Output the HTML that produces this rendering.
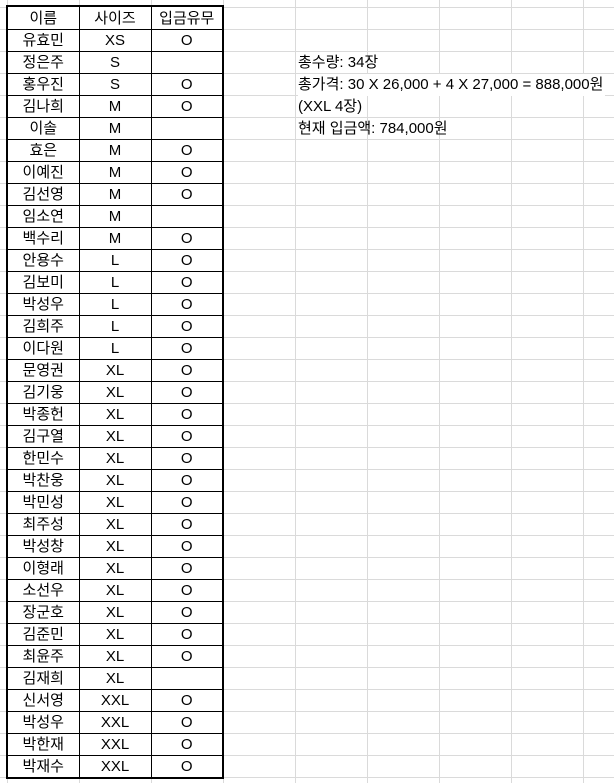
<!DOCTYPE html>
<html><head><meta charset="utf-8"><style>
html,body{margin:0;padding:0}
body{width:614px;height:783px;position:relative;overflow:hidden;background:#fff;
background-image:linear-gradient(to bottom,#dadada 1px,transparent 1px),linear-gradient(to right,#dadada 1px,transparent 1px);
background-size:100% 22px,72px 100%;background-position:0 7px,7px 0;
font-family:"Liberation Sans","Noto Sans CJK KR",sans-serif;font-size:15px;color:#000}
table{position:absolute;left:6px;top:5px;border-collapse:collapse;table-layout:fixed;width:213px;background:#fff;border:2px solid #000}
td{border:1px solid #000;height:21px;padding:0;text-align:center;line-height:21px;overflow:hidden;white-space:nowrap}
td span{position:relative;top:1px}
tr.h td{height:22px}
.t{position:absolute;left:298px;line-height:22px;white-space:nowrap;background:#fff;padding-right:2px}
</style></head><body>
<table>
<col style="width:72px"><col style="width:72px"><col style="width:72px">
<tr class="h"><td>이름</td><td>사이즈</td><td>입금유무</td></tr>
<tr><td>유효민</td><td>XS</td><td>O</td></tr>
<tr><td>정은주</td><td>S</td><td></td></tr>
<tr><td>홍우진</td><td>S</td><td>O</td></tr>
<tr><td>김나희</td><td>M</td><td>O</td></tr>
<tr><td>이솔</td><td>M</td><td></td></tr>
<tr><td>효은</td><td>M</td><td>O</td></tr>
<tr><td>이예진</td><td>M</td><td>O</td></tr>
<tr><td>김선영</td><td>M</td><td>O</td></tr>
<tr><td>임소연</td><td>M</td><td></td></tr>
<tr><td>백수리</td><td>M</td><td>O</td></tr>
<tr><td>안용수</td><td>L</td><td>O</td></tr>
<tr><td>김보미</td><td>L</td><td>O</td></tr>
<tr><td>박성우</td><td>L</td><td>O</td></tr>
<tr><td>김희주</td><td>L</td><td>O</td></tr>
<tr><td>이다원</td><td>L</td><td>O</td></tr>
<tr><td>문영권</td><td>XL</td><td>O</td></tr>
<tr><td>김기웅</td><td>XL</td><td>O</td></tr>
<tr><td>박종헌</td><td>XL</td><td>O</td></tr>
<tr><td>김구열</td><td>XL</td><td>O</td></tr>
<tr><td>한민수</td><td>XL</td><td>O</td></tr>
<tr><td>박찬웅</td><td>XL</td><td>O</td></tr>
<tr><td>박민성</td><td>XL</td><td>O</td></tr>
<tr><td>최주성</td><td>XL</td><td>O</td></tr>
<tr><td>박성창</td><td>XL</td><td>O</td></tr>
<tr><td>이형래</td><td>XL</td><td>O</td></tr>
<tr><td>소선우</td><td>XL</td><td>O</td></tr>
<tr><td>장군호</td><td>XL</td><td>O</td></tr>
<tr><td>김준민</td><td>XL</td><td>O</td></tr>
<tr><td>최윤주</td><td>XL</td><td>O</td></tr>
<tr><td>김재희</td><td>XL</td><td></td></tr>
<tr><td>신서영</td><td>XXL</td><td>O</td></tr>
<tr><td>박성우</td><td>XXL</td><td>O</td></tr>
<tr><td>박한재</td><td>XXL</td><td>O</td></tr>
<tr><td>박재수</td><td>XXL</td><td>O</td></tr>
</table>
<div class="t" style="top:52px;background:none">총수량: 34장</div>
<div class="t" style="top:74px">총가격: 30 X 26,000 + 4 X 27,000 = 888,000원</div>
<div class="t" style="top:96px;background:none">(XXL 4장)</div>
<div class="t" style="top:118px;background:none">현재 입금액: 784,000원</div>
</body></html>
